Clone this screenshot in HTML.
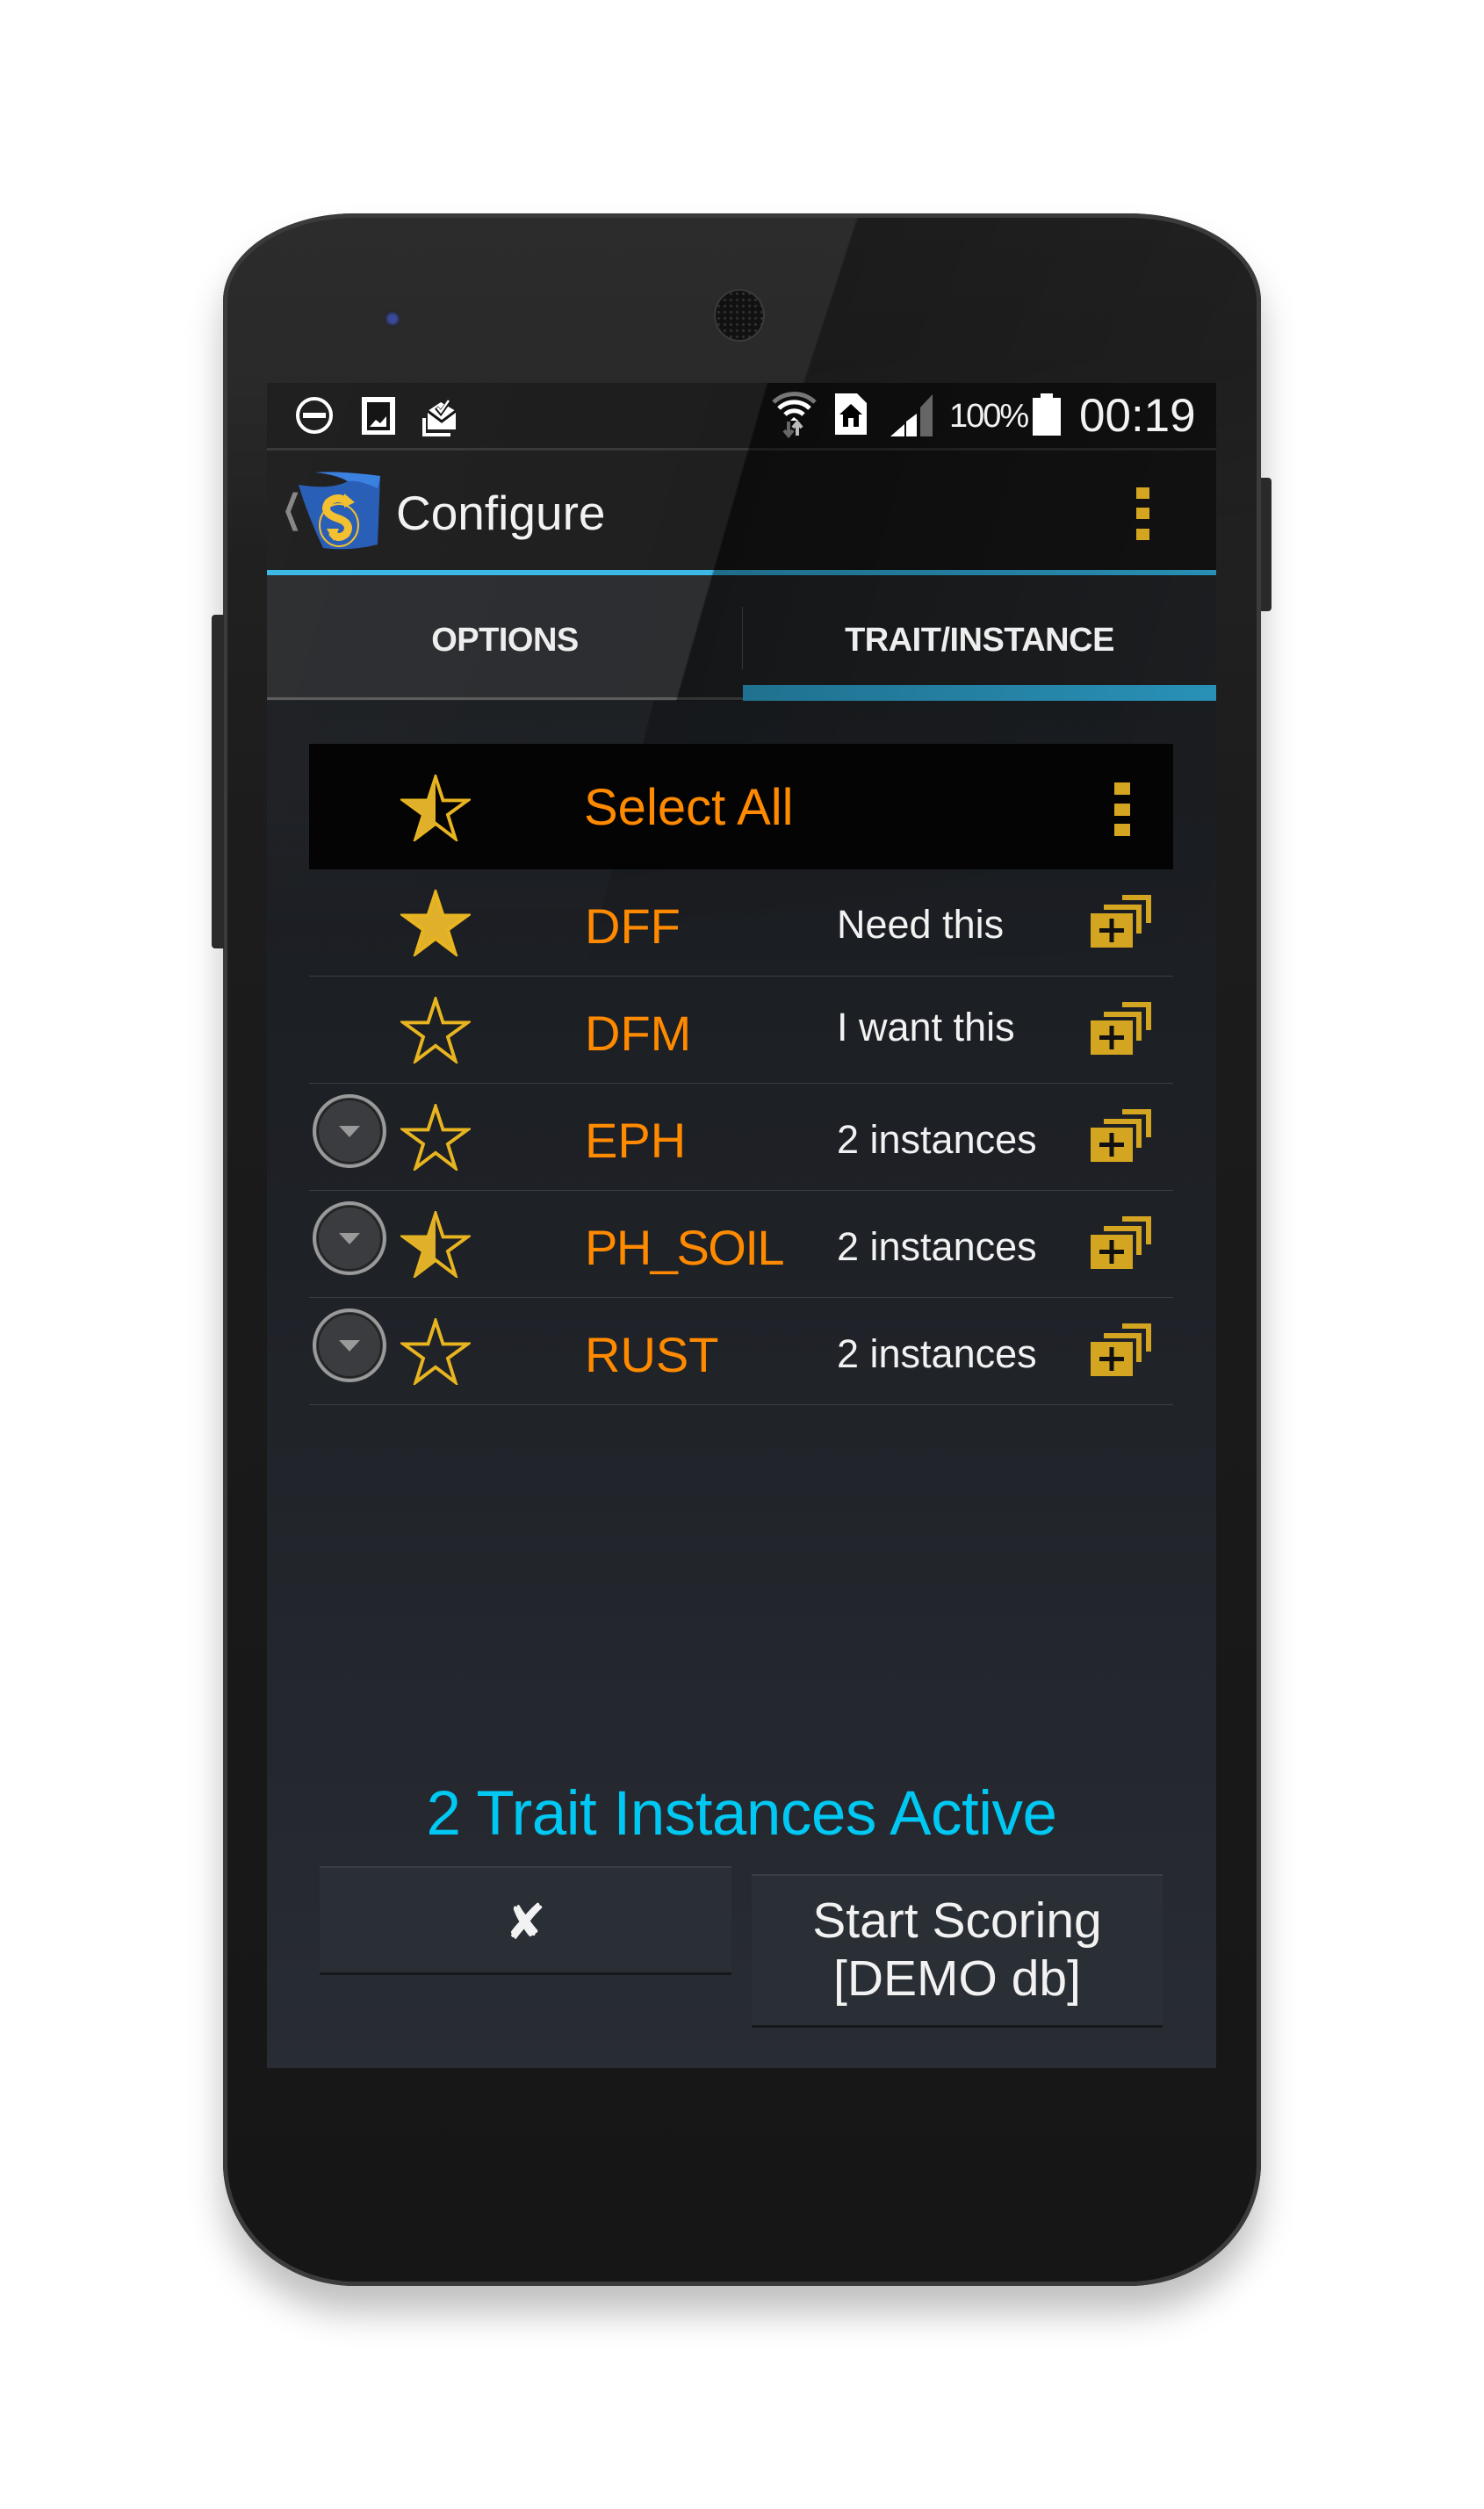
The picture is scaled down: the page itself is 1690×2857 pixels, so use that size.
<!DOCTYPE html>
<html><head><meta charset="utf-8"><style>
*{margin:0;padding:0;box-sizing:border-box}
body{width:1690px;height:2857px;background:#fff;position:relative;overflow:hidden;font-family:"Liberation Sans",sans-serif}
.a{position:absolute}
.phone{left:254px;top:243px;width:1182px;height:2360px;border-radius:150px 150px 150px 150px / 100px 100px 140px 140px;background:linear-gradient(180deg,#262626 0%,#1c1c1c 30%,#161616 100%);box-shadow:0 0 0 5px #3b3b3b inset,0 30px 40px rgba(0,0,0,.25)}
.screen{left:304px;top:436px;width:1081px;height:1919px;background:linear-gradient(180deg,#181a1d 0%,#1e2126 50%,#282c33 100%);overflow:hidden}
.txt{white-space:nowrap;line-height:1}
.org{color:#ff8a00}
.wh{color:#f2f2f2}
.row{left:352px;width:984px;height:1px;background:#3a3e43}
</style></head><body>
<div class="a phone"></div>
<div class="a" style="left:259px;top:248px;width:1172px;height:400px;border-radius:145px 145px 0 0/95px 95px 0 0;background:linear-gradient(108deg,rgba(255,255,255,.03) 0%,rgba(255,255,255,.03) 55%,rgba(0,0,0,.25) 55.2%,rgba(0,0,0,.1) 100%);-webkit-mask-image:linear-gradient(180deg,#000 40%,transparent 100%);mask-image:linear-gradient(180deg,#000 40%,transparent 100%)"></div>
<div class="a" style="left:1436px;top:544px;width:12px;height:152px;background:#2a2a2a;border-radius:0 4px 4px 0"></div>
<div class="a" style="left:241px;top:700px;width:14px;height:380px;background:#2a2a2a;border-radius:4px 0 0 4px"></div>
<div class="a" style="left:438px;top:353px;width:18px;height:20px;border-radius:50%;background:radial-gradient(circle,#3a4a9a 30%,#222 70%,#555 100%)"></div>
<div class="a" style="left:815px;top:331px;width:54px;height:56px;border-radius:50%;background:radial-gradient(circle,#333 1px,#111 2px) 0 0/7px 7px,#151515;box-shadow:0 0 0 2px #3a3a3a"></div>
<div class="a" style="left:1215px;top:350px;width:14px;height:14px;border-radius:50%;background:#1e1e1e"></div>
<div class="a" style="left:1250px;top:352px;width:10px;height:10px;border-radius:50%;background:#1e1e1e"></div>

<div class="a screen">
  <div class="a" style="left:0;top:0;width:1081px;height:76px;background:#141414"></div>
  <div class="a" style="left:0;top:74px;width:1081px;height:3px;background:#303030"></div>
  <div class="a" style="left:0;top:77px;width:1081px;height:136px;background:#161616"></div>
  <div class="a" style="left:0;top:213px;width:1081px;height:6px;background:#33b5e5"></div>
  <div class="a" style="left:0;top:219px;width:1081px;height:141px;background:#232528"></div>
  <div class="a" style="left:0;top:358px;width:542px;height:3px;background:#555"></div>
  <div class="a" style="left:542px;top:344px;width:539px;height:18px;background:#33b5e5"></div>
  <div class="a" style="left:541px;top:255px;width:1px;height:71px;background:#555"></div>
  <div class="a" style="left:0;top:0;width:1081px;height:362px;background:linear-gradient(106deg,rgba(255,255,255,.05) 0%,rgba(255,255,255,.04) 48%,rgba(0,0,0,.4) 48.2%,rgba(0,0,0,.2) 100%)"></div>
  <div class="a" style="left:0;top:362px;width:1081px;height:300px;background:linear-gradient(104deg,rgba(255,255,255,.025) 0%,rgba(255,255,255,.02) 38%,rgba(0,0,0,.15) 38.2%,rgba(0,0,0,0) 100%);-webkit-mask-image:linear-gradient(180deg,#000 30%,transparent 100%);mask-image:linear-gradient(180deg,#000 30%,transparent 100%)"></div>
</div>

<svg class="a" style="left:335px;top:450px" width="200" height="50" viewBox="0 0 200 50">
  <circle cx="23" cy="23" r="19" fill="none" stroke="#fff" stroke-width="4"/>
  <rect x="10" y="20" width="26" height="6" fill="#fff"/>
  <rect x="77" y="2" width="38" height="43" fill="#fff"/>
  <rect x="83" y="8" width="26" height="32" fill="#151515"/>
  <path d="M86 36 L93 28 L98 32 L105 24 L105 36Z" fill="#fff"/>
  <path d="M152 18 L167 8 L184 18 L184 39 L152 39Z" fill="#fff"/>
  <path d="M152 18 L168 30 L184 18" stroke="#151515" stroke-width="3" fill="none"/>
  <path d="M162 14 L167 20 L177 6" stroke="#151515" stroke-width="5" fill="none"/>
  <path d="M163 14 L167 19 L176 6" stroke="#fff" stroke-width="2.5" fill="none"/>
  <path d="M148 26 L148 45 L178 45" stroke="#fff" stroke-width="4" fill="none"/>
</svg>
<svg class="a" style="left:878px;top:444px" width="200" height="56" viewBox="0 0 200 56">
  <path d="M3 14 A34 34 0 0 1 50 14" stroke="#777" stroke-width="5" fill="none"/>
  <path d="M9 21 A25 25 0 0 1 44 21" stroke="#fff" stroke-width="5" fill="none"/>
  <path d="M16 28 A15 15 0 0 1 37 28" stroke="#fff" stroke-width="5" fill="none"/>
  <path d="M22 35 L26 31 L31 35Z" fill="#fff"/>
  <path d="M20 36 L20 52 M15 46 L20 52 L25 46" stroke="#666" stroke-width="4" fill="none"/>
  <path d="M30 52 L30 38 M25 43 L30 37 L35 43" stroke="#bbb" stroke-width="4" fill="none"/>
  <path d="M73 4 L98 4 L109 15 L109 51 L73 51Z" fill="#fff"/>
  <path d="M78 28 L91 16 L104 28 L100 28 L100 42 L82 42 L82 28Z" fill="#000"/>
  <rect x="88" y="32" width="6" height="10" fill="#fff"/>
  <path d="M136 53 L152 39 L152 53Z" fill="#fff"/>
  <path d="M154 53 L154 36 L166 27 L166 53Z" fill="#fff"/>
  <path d="M170 53 L170 20 L184 5 L184 53Z" fill="#666"/>
</svg>
<div class="a txt wh" style="left:1081px;top:455px;font-size:38px;letter-spacing:-2px">100%</div>
<div class="a" style="left:1176px;top:453px;width:32px;height:43px;background:#fff"></div>
<div class="a" style="left:1185px;top:448px;width:14px;height:6px;background:#fff"></div>
<div class="a txt wh" style="left:1229px;top:447px;font-size:53px">00:19</div>

<div class="a txt" style="left:314px;top:558px;font-size:44px;color:#888;transform:scaleX(.6)">&#10094;</div>
<svg class="a" style="left:338px;top:536px" width="100" height="92" viewBox="0 0 100 92">
  <path d="M2 16 Q40 22 58 12 Q44 4 20 2 Q50 0 95 6 L92 84 Q60 92 30 88 Q12 50 2 16Z" fill="#2a5fb8"/>
  <path d="M22 2 Q50 0 95 6 L92 20 Q70 10 58 12 Q44 4 22 2Z" fill="#3b82e0"/>
  <path d="M60 38 Q48 26 36 36 Q28 48 46 54 Q64 60 56 72 Q46 80 40 70" stroke="#f2c030" stroke-width="9" fill="none"/>
  <path d="M54 26 L66 36 L54 42Z" fill="#f2c030"/>
  <path d="M34 66 L42 80 L48 66Z" fill="#f2c030"/>
  <ellipse cx="48" cy="62" rx="22" ry="24" fill="none" stroke="#f2c030" stroke-width="2"/>
</svg>
<div class="a txt wh" style="left:451px;top:557px;font-size:55px">Configure</div>
<div class="a" style="left:1294px;top:555px;width:15px;height:13px;background:#d4a520"></div>
<div class="a" style="left:1294px;top:578px;width:15px;height:13px;background:#d4a520"></div>
<div class="a" style="left:1294px;top:602px;width:15px;height:13px;background:#d4a520"></div>

<div class="a txt" style="left:304px;width:542px;text-align:center;top:710px;font-size:38px;font-weight:bold;color:#eee;letter-spacing:-.5px">OPTIONS</div>
<div class="a txt" style="left:846px;width:539px;text-align:center;top:710px;font-size:38px;font-weight:bold;color:#eee;letter-spacing:-.5px">TRAIT/INSTANCE</div>

<div class="a" style="left:352px;top:847px;width:984px;height:143px;background:#040404"></div>
<div class="a txt org" style="left:665px;top:891px;font-size:58px">Select All</div>
<div class="a" style="left:1269px;top:891px;width:18px;height:14px;background:#d4a520"></div>
<div class="a" style="left:1269px;top:915px;width:18px;height:14px;background:#d4a520"></div>
<div class="a" style="left:1269px;top:938px;width:18px;height:14px;background:#d4a520"></div>

<svg width="0" height="0" style="position:absolute">
<defs>
<path id="st" d="M50 4 L61 38 L97 38 L68 59 L79 94 L50 72 L21 94 L32 59 L3 38 L39 38Z"/>
<clipPath id="hl"><rect x="0" y="0" width="50" height="100"/></clipPath>
<g id="add">
  <rect x="0" y="21" width="48" height="39" fill="#d4a520"/>
  <rect x="10" y="38" width="28" height="5" fill="#111"/>
  <rect x="21.5" y="27" width="5" height="27" fill="#111"/>
  <path d="M15 14 L55 14 L55 44" stroke="#d4a520" stroke-width="6" fill="none"/>
  <path d="M36 3 L66 3 L66 32" stroke="#d4a520" stroke-width="6" fill="none"/>
</g>
<g id="dd">
  <circle cx="43" cy="43" r="40" fill="#3a3c40" stroke="#9a9a9a" stroke-width="4"/>
  <circle cx="43" cy="43" r="36" fill="none" stroke="#222" stroke-width="2"/>
  <path d="M31 37 L55 37 L43 50Z" fill="#9a9a9a"/>
</g>
</defs></svg>

<svg class="a" style="left:456px;top:882px" width="80" height="76" viewBox="0 0 100 98"><use href="#st" fill="none" stroke="#e8b420" stroke-width="5"/><use href="#st" fill="#e0b02a" clip-path="url(#hl)"/></svg>
<svg class="a" style="left:456px;top:1013px" width="80" height="76" viewBox="0 0 100 98"><use href="#st" fill="#e0b02a" stroke="#e8b420" stroke-width="5"/></svg>
<svg class="a" style="left:456px;top:1135px" width="80" height="76" viewBox="0 0 100 98"><use href="#st" fill="none" stroke="#e8b420" stroke-width="5"/></svg>
<svg class="a" style="left:456px;top:1257px" width="80" height="76" viewBox="0 0 100 98"><use href="#st" fill="none" stroke="#e8b420" stroke-width="5"/></svg>
<svg class="a" style="left:456px;top:1379px" width="80" height="76" viewBox="0 0 100 98"><use href="#st" fill="none" stroke="#e8b420" stroke-width="5"/><use href="#st" fill="#e0b02a" clip-path="url(#hl)"/></svg>
<svg class="a" style="left:456px;top:1501px" width="80" height="76" viewBox="0 0 100 98"><use href="#st" fill="none" stroke="#e8b420" stroke-width="5"/></svg>

<svg class="a" style="left:355px;top:1245px" width="86" height="86"><use href="#dd"/></svg>
<svg class="a" style="left:355px;top:1367px" width="86" height="86"><use href="#dd"/></svg>
<svg class="a" style="left:355px;top:1489px" width="86" height="86"><use href="#dd"/></svg>

<div class="a txt org" style="left:666px;top:1027px;font-size:56px">DFF</div>
<div class="a txt org" style="left:666px;top:1149px;font-size:56px">DFM</div>
<div class="a txt org" style="left:666px;top:1271px;font-size:56px">EPH</div>
<div class="a txt org" style="left:666px;top:1393px;font-size:56px;letter-spacing:-1.5px">PH_SOIL</div>
<div class="a txt org" style="left:666px;top:1515px;font-size:56px">RUST</div>

<div class="a txt wh" style="left:953px;top:1030px;font-size:45px">Need this</div>
<div class="a" style="left:953px;top:1140px;width:220px;height:72px;overflow:hidden"><div class="txt wh" style="font-size:45px;line-height:60px">I want this<br>specially</div></div>
<div class="a txt wh" style="left:953px;top:1275px;font-size:45px">2 instances</div>
<div class="a txt wh" style="left:953px;top:1397px;font-size:45px">2 instances</div>
<div class="a txt wh" style="left:953px;top:1519px;font-size:45px">2 instances</div>

<svg class="a" style="left:1242px;top:1019px" width="72" height="64"><use href="#add"/></svg>
<svg class="a" style="left:1242px;top:1141px" width="72" height="64"><use href="#add"/></svg>
<svg class="a" style="left:1242px;top:1263px" width="72" height="64"><use href="#add"/></svg>
<svg class="a" style="left:1242px;top:1385px" width="72" height="64"><use href="#add"/></svg>
<svg class="a" style="left:1242px;top:1507px" width="72" height="64"><use href="#add"/></svg>

<div class="a row" style="top:1111px"></div>
<div class="a row" style="top:1233px"></div>
<div class="a row" style="top:1355px"></div>
<div class="a row" style="top:1477px"></div>
<div class="a row" style="top:1599px"></div>

<div class="a txt" style="left:304px;width:1081px;text-align:center;top:2030px;font-size:71px;color:#00c8f2;letter-spacing:-.5px">2 Trait Instances Active</div>
<div class="a" style="left:364px;top:2125px;width:469px;height:121px;background:#2a2e35;border-top:2px solid #3a3e45;box-shadow:0 3px 0 #16181b"></div>
<div class="a txt" style="left:364px;width:469px;text-align:center;top:2162px;font-size:56px;color:#f2f2f2;font-family:'DejaVu Sans',sans-serif">&#10008;</div>
<div class="a" style="left:856px;top:2134px;width:468px;height:172px;background:#2a2e35;border-top:2px solid #3a3e45;box-shadow:0 3px 0 #16181b"></div>
<div class="a wh" style="left:856px;width:468px;text-align:center;top:2154px;font-size:57px;line-height:66px">Start Scoring<br>[DEMO db]</div>
</body></html>
